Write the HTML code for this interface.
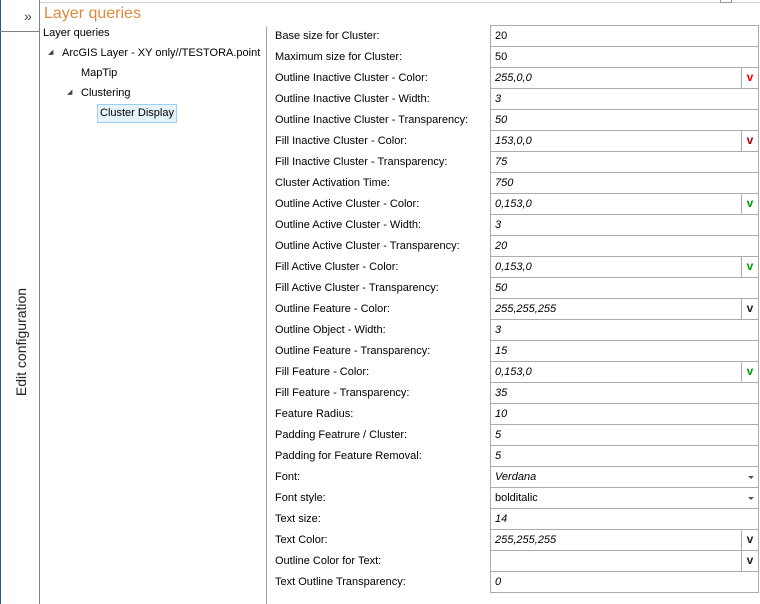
<!DOCTYPE html><html><head><style>
body{margin:0;width:760px;height:604px;background:#fff;position:relative;overflow:hidden;font-family:"Liberation Sans",sans-serif;font-size:11px;color:#000}
.a{position:absolute}
.lbl{position:absolute;left:275px;height:21px;line-height:21px;white-space:nowrap}
.box{position:absolute;left:490px;width:267px;height:20px;border:1px solid #ababab;box-sizing:content-box}
.box span{position:absolute;left:4px;top:0;line-height:21px;font-style:italic}
.box span.n{font-style:normal}
.btn{position:absolute;right:0;top:0;width:16px;height:20px;border-left:1px solid #ababab;text-align:center;line-height:19px;font-weight:bold;font-size:12px;background:#fff}
.dd{position:absolute;right:4px;top:9px;width:0;height:0;border-left:3px solid transparent;border-right:3px solid transparent;border-top:3px solid #555}
.t{position:absolute;font-size:11px;white-space:nowrap}
</style></head><body>
<div class="a" style="left:0;top:0;width:1px;height:604px;background:#2b5797"></div>
<div class="a" style="left:39px;top:0;width:1px;height:604px;background:#828282"></div>
<div class="a" style="left:0;top:31px;width:39px;height:1px;background:#828282"></div>
<div class="a" style="left:24px;top:8px;font-size:14px;color:#444">»</div>
<div class="a" style="left:40px;top:2px;width:720px;height:1px;background:#d0d0d0"></div>
<div class="a" style="left:720px;top:0;width:10px;height:2px;border:1px solid #999;border-top:none"></div>
<div class="a" style="left:21px;top:342px;transform:translate(-50%,-50%) rotate(-90deg);font-size:14px;white-space:nowrap;color:#222">Edit configuration</div>
<div class="a" style="left:44px;top:5px;font-size:16px;color:#e08a3c">Layer queries</div>
<div class="a" style="left:266px;top:27px;width:1px;height:577px;background:#a0a0a0"></div>
<div class="t" style="left:43px;top:27px">Layer queries</div>
<div class="a" style="left:48px;top:48px;font-size:7px;color:#444">◢</div>
<div class="t" style="left:62px;top:47px">ArcGIS Layer - XY only//TESTORA.point</div>
<div class="t" style="left:81px;top:67px">MapTip</div>
<div class="a" style="left:67px;top:88px;font-size:7px;color:#444">◢</div>
<div class="t" style="left:81px;top:87px">Clustering</div>
<div class="a" style="left:97px;top:104px;width:80px;height:19px;background:#e5f3fb;border:1px solid #9cd0f0;box-sizing:border-box"></div>
<div class="t" style="left:100px;top:107px">Cluster Display</div>
<div id="rows"></div>
<script>
var d=[["Base size for Cluster:","20","n"],["Maximum size for Cluster:","50","n"],["Outline Inactive Cluster - Color:","255,0,0","","#e00"],["Outline Inactive Cluster - Width:","3"],["Outline Inactive Cluster - Transparency:","50"],["Fill Inactive Cluster - Color:","153,0,0","","#a00"],["Fill Inactive Cluster - Transparency:","75"],["Cluster Activation Time:","750"],["Outline Active Cluster - Color:","0,153,0","","#090"],["Outline Active Cluster - Width:","3"],["Outline Active Cluster - Transparency:","20"],["Fill Active Cluster - Color:","0,153,0","","#090"],["Fill Active Cluster - Transparency:","50"],["Outline Feature - Color:","255,255,255","","#222"],["Outline Object - Width:","3"],["Outline Feature - Transparency:","15"],["Fill Feature - Color:","0,153,0","","#090"],["Fill Feature - Transparency:","35"],["Feature Radius:","10"],["Padding Featrure / Cluster:","5"],["Padding for Feature Removal:","5"],["Font:","Verdana","","dd"],["Font style:","bolditalic","n","dd"],["Text size:","14"],["Text Color:","255,255,255","","#222"],["Outline Color for Text:","","","#222"],["Text Outline Transparency:","0"]];
var h="";d.forEach(function(r,i){var y=25+i*21;h+='<div class="lbl" style="top:'+(y+1)+'px">'+r[0]+'</div><div class="box" style="top:'+y+'px"><span class="'+(r[2]||"")+'">'+r[1]+'</span>';if(r[3]=="dd")h+='<div class="dd"></div>';else if(r[3])h+='<div class="btn" style="color:'+r[3]+'">v</div>';h+='</div>';});
document.getElementById("rows").innerHTML=h;
</script>
</body></html>
